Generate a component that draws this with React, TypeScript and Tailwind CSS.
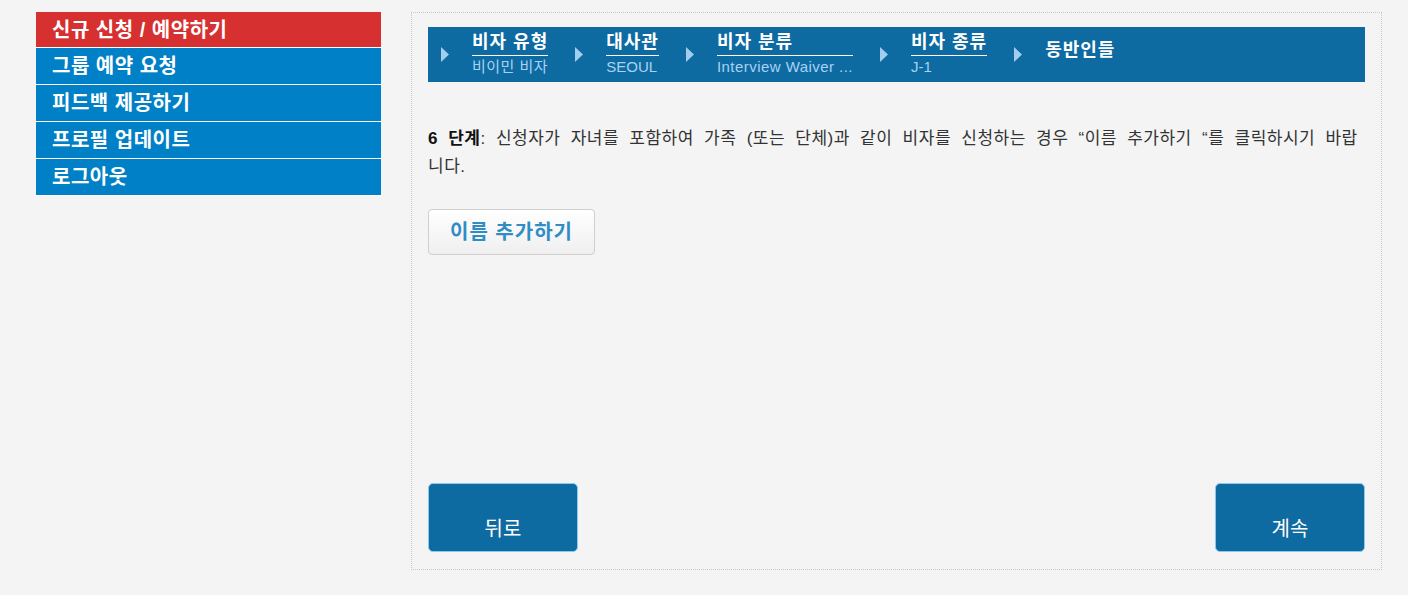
import React from 'react'

const FONT = '"Liberation Sans", "Noto Sans CJK KR", sans-serif'

const menu = [
  { label: '신규 신청 / 예약하기', active: true },
  { label: '그룹 예약 요청' },
  { label: '피드백 제공하기' },
  { label: '프로필 업데이트' },
  { label: '로그아웃' },
]

const steps = [
  { label: '비자 유형', sub: '비이민 비자', subClass: 'tracking-[0.5px]' },
  { label: '대사관', sub: 'SEOUL', subClass: '' },
  { label: '비자 분류', sub: 'Interview Waiver ...', subClass: 'tracking-[0.45px]' },
  { label: '비자 종류', sub: 'J-1', subClass: '' },
]

const Arrow = () => (
  <svg width="8" height="15" viewBox="0 0 8 15" className="shrink-0">
    <polygon points="0,0 8,7.5 0,15" fill="#a3cdef" />
  </svg>
)

export default function App() {
  return (
    <div className="min-h-[595px] bg-[#f4f4f4] flex items-start pt-[12px] pl-[36px]" style={{ fontFamily: FONT }}>
      <ul className="w-[345px] shrink-0">
        {menu.map((m) => (
          <li
            key={m.label}
            className={`border-b border-white flex items-center pl-[16px] text-[20px] tracking-[0.5px] font-bold text-white ${m.active ? 'bg-[#d63030] h-[36px]' : 'bg-[#0080c6] h-[37px]'}`}
          >
            {m.label}
          </li>
        ))}
      </ul>

      <div className="ml-[30px] w-[971px] h-[558px] border border-dotted border-[#c8c8c8] pt-[14px] px-[16px] pb-[17px] flex flex-col">
        <div className="h-[55px] bg-[#0e6ba1] flex items-center pl-[13px]">
          {steps.map((s, i) => (
            <div key={s.label} className={`flex items-center ${i > 0 ? 'ml-[27px]' : ''}`}>
              <Arrow />
              <div className="ml-[23px] flex flex-col">
                <div className="text-[18px] tracking-[1px] font-bold text-white leading-[22px] pb-[2px] border-b border-white">{s.label}</div>
                <div className={`text-[15px] text-[#a7d2f4] leading-[20px] mt-[1px] mb-[2px] ${s.subClass}`}>{s.sub}</div>
              </div>
            </div>
          ))}
          <div className="flex items-center ml-[27px]">
            <Arrow />
            <div className="ml-[23px] text-[18px] tracking-[1px] font-bold text-white leading-[22px] -mt-[10px]">동반인들</div>
          </div>
        </div>

        <p className="mt-[43px] text-[17px] leading-[28px] text-[#333] tracking-[0.5px] [word-spacing:5px]">
          <b className="text-[#111]">6 단계</b>: 신청자가 자녀를 포함하여 가족 (또는 단체)과 같이 비자를 신청하는 경우 “이름 추가하기 “를 클릭하시기 바랍니다.
        </p>

        <div className="mt-[28px]">
          <button className="w-[167px] h-[46px] rounded-[4px] border border-[#cfcfcf] bg-gradient-to-b from-white to-[#efefef] text-[20px] tracking-[1px] font-bold text-[#2f8dc3]">
            이름 추가하기
          </button>
        </div>

        <div className="mt-auto flex justify-between">
          <button className="w-[150px] h-[69px] rounded-[5px] border border-[#8ec8f0] bg-[#0e6ba1] text-white text-[20px] flex items-end justify-center pb-[7px]">
            뒤로
          </button>
          <button className="w-[150px] h-[69px] rounded-[5px] border border-[#8ec8f0] bg-[#0e6ba1] text-white text-[20px] flex items-end justify-center pb-[7px]">
            계속
          </button>
        </div>
      </div>
    </div>
  )
}
